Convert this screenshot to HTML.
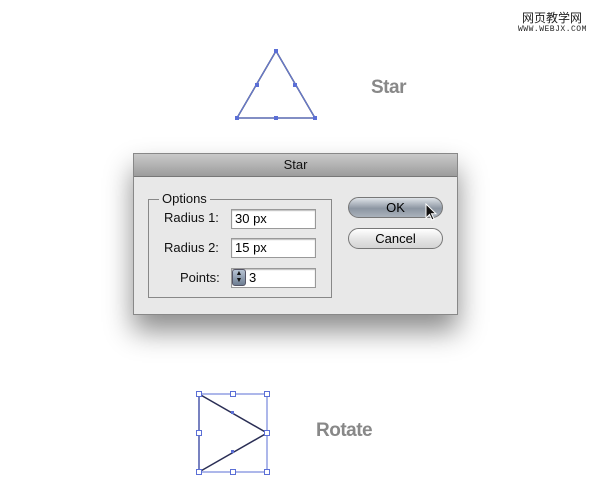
<!DOCTYPE html>
<html><head><meta charset="utf-8"><style>
body{margin:0;width:600px;height:502px;background:#fff;position:relative;overflow:hidden;font-family:"Liberation Sans",sans-serif}
.a{position:absolute}
.lbl{position:absolute;font-size:13px;color:#111}
.in{position:absolute;background:#fff;border:1px solid #999;box-shadow:inset 0 1px 1px #bbb;font-size:13px;line-height:18px;padding-left:3px;box-sizing:border-box}
.btn{position:absolute;border:1px solid #777;border-radius:11px;font-size:13px;text-align:center;box-sizing:border-box}
</style></head><body>
<div class="a" style="left:522px;top:9px;font-family:'Noto Sans CJK SC',sans-serif;font-size:12px;color:#222">网页教学网</div>
<div class="a" style="left:518px;top:25px;font-family:'Liberation Mono',monospace;font-size:8px;color:#222;letter-spacing:0.5px">WWW.WEBJX.COM</div>
<svg class="a" style="left:0;top:0" width="600" height="502">
<polygon points="276,51 237,118 315,118" fill="none" stroke="#333a60" stroke-width="1.5"/>
<polygon points="276,51 237,118 315,118" fill="none" stroke="#6b7fd8" stroke-width="1"/>
<g fill="#5b6fd6"><rect x="274" y="49" width="4" height="4"/><rect x="235" y="116" width="4" height="4"/><rect x="313" y="116" width="4" height="4"/><rect x="274" y="116" width="4" height="4"/><rect x="255" y="83" width="4" height="4"/><rect x="293" y="83" width="4" height="4"/></g>
<polygon points="199,394 267,433 199,472" fill="none" stroke="#2a2e55" stroke-width="1.5"/>
<rect x="199" y="394" width="68" height="78" fill="none" stroke="#5b6fd6"/>
<g fill="#fff" stroke="#5b6fd6"><rect x="196.5" y="391.5" width="5" height="5"/><rect x="230.5" y="391.5" width="5" height="5"/><rect x="264.5" y="391.5" width="5" height="5"/><rect x="196.5" y="430.5" width="5" height="5"/><rect x="264.5" y="430.5" width="5" height="5"/><rect x="196.5" y="469.5" width="5" height="5"/><rect x="230.5" y="469.5" width="5" height="5"/><rect x="264.5" y="469.5" width="5" height="5"/></g>
<g fill="#5b6fd6"><rect x="231" y="411" width="3" height="3"/><rect x="231" y="450" width="3" height="3"/></g>
</svg>
<div class="a" style="left:371px;top:77px;font-size:19px;font-weight:bold;color:#888;letter-spacing:-0.5px">Star</div>
<div class="a" style="left:316px;top:420px;font-size:19px;font-weight:bold;color:#888;letter-spacing:-0.5px">Rotate</div>
<div class="a" style="left:133px;top:153px;width:325px;height:162px;background:#e8e8e8;border:1px solid #888;box-sizing:border-box;box-shadow:0 16px 26px rgba(0,0,0,0.45)">
<div style="height:22px;background:linear-gradient(#c9c9c9,#9c9c9c);border-bottom:1px solid #777;text-align:center;font-size:13px;line-height:21px;color:#111">Star</div>
</div>
<div class="a" style="left:148px;top:199px;width:184px;height:99px;border:1px solid #888;box-sizing:border-box"></div>
<div class="a" style="left:159px;top:191px;background:#e8e8e8;padding:0 3px;font-size:13px;color:#111">Options</div>
<div class="lbl" style="left:164px;top:210px">Radius 1:</div>
<div class="lbl" style="left:164px;top:240px">Radius 2:</div>
<div class="lbl" style="left:180px;top:270px">Points:</div>
<div class="in" style="left:231px;top:209px;width:85px;height:20px">30 px</div>
<div class="in" style="left:231px;top:238px;width:85px;height:20px">15 px</div>
<div class="in" style="left:231px;top:268px;width:85px;height:20px;padding-left:17px">3</div>
<div class="a" style="left:232px;top:269px;width:14px;height:17px;background:linear-gradient(#b8c4d4,#6d7d92);border:1px solid #556;border-radius:3px;box-sizing:border-box;font-size:7px;color:#111;text-align:center;line-height:7px">▲<br>▼</div>
<div class="btn" style="left:348px;top:197px;width:95px;height:21px;background:linear-gradient(#dfe3e8,#8c96a2 55%,#aab2bc);line-height:19px">OK</div>
<div class="btn" style="left:348px;top:228px;width:95px;height:21px;background:linear-gradient(#fff,#e6e6e6 50%,#d4d4d4);line-height:19px">Cancel</div>
<svg class="a" style="left:425px;top:203px" width="14" height="20"><path d="M1,1 L1,15 L4.5,11.5 L7,17 L9,16 L6.5,10.8 L11,10.8 Z" fill="#111" stroke="#fff" stroke-width="1"/></svg>
</body></html>
